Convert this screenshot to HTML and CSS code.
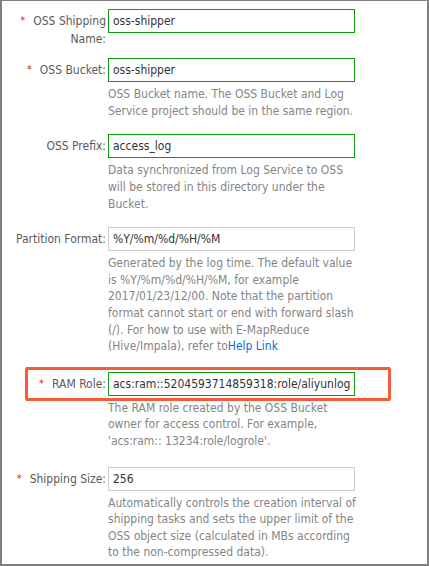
FILE: index.html
```html
<!DOCTYPE html>
<html lang="en">
<head>
  <meta charset="UTF-8" />
  <title>OSS Shipping</title>
  <link rel="stylesheet" href="styles.css">
</head>
<body>
  <div class="frame">
    <form class="ship-form">

      <div class="row row-first">
        <label class="label"><span class="req">*</span>OSS Shipping Name:</label>
        <div class="field">
          <input class="input active" type="text" value="oss-shipper" />
        </div>
      </div>

      <div class="row">
        <label class="label"><span class="req">*</span>OSS Bucket:</label>
        <div class="field">
          <input class="input active" type="text" value="oss-shipper" />
          <p class="help">OSS Bucket name. The OSS Bucket and Log<br>Service project should be in the same region.</p>
        </div>
      </div>

      <div class="row">
        <label class="label">OSS Prefix:</label>
        <div class="field">
          <input class="input active" type="text" value="access_log" />
          <p class="help">Data synchronized from Log Service to OSS<br>will be stored in this directory under the<br>Bucket.</p>
        </div>
      </div>

      <div class="row">
        <label class="label">Partition Format:</label>
        <div class="field">
          <input class="input" type="text" value="%Y/%m/%d/%H/%M" />
          <p class="help">Generated by the log time. The default value<br>is %Y/%m/%d/%H/%M, for example<br>2017/01/23/12/00. Note that the partition<br>format cannot start or end with forward slash<br>(/). For how to use with E-MapReduce<br>(Hive/Impala), refer to<a class="link" href="#">Help Link</a></p>
        </div>
      </div>

      <div class="row marked">
        <div class="highlight"></div>
        <label class="label"><span class="req">*</span>RAM Role:</label>
        <div class="field">
          <input class="input active" type="text" value="acs:ram::5204593714859318:role/aliyunlogdefaultrole" />
          <p class="help">The RAM role created by the OSS Bucket<br>owner for access control. For example,<br>'acs:ram:: 13234:role/logrole'.</p>
        </div>
      </div>

      <div class="row">
        <label class="label"><span class="req">*</span>Shipping Size:</label>
        <div class="field">
          <input class="input" type="text" value="256" />
          <p class="help">Automatically controls the creation interval of<br>shipping tasks and sets the upper limit of the<br>OSS object size (calculated in MBs according<br>to the non-compressed data).</p>
        </div>
      </div>

    </form>
  </div>
</body>
</html>
```

FILE: styles.css
```css
* {
  box-sizing: border-box;
}

body {
  margin: 0;
  background: #fff;
  font-family: 'DejaVu Sans Condensed', 'DejaVu Sans', sans-serif;
  font-size: 12px;
}

.frame {
  width: 429px;
  height: 566px;
  border: solid #808080;
  border-width: 1px 2px 2px 2px;
  overflow: hidden;
}

.ship-form {
  padding: 8px 0 0 10px;
}

.row {
  display: flex;
  align-items: flex-start;
  margin-bottom: 15px;
  position: relative;
}

.row-first {
  margin-bottom: 11px;
}

.marked {
  margin-top: 17px;
  margin-bottom: 17px;
}

.label {
  flex: none;
  width: 94px;
  padding-top: 4px;
  margin-right: 2px;
  text-align: right;
  line-height: 16.6px;
  color: #5a5a5a;
}

.req {
  color: #f01818;
  font-size: 11px;
  margin-right: 8px;
  position: relative;
  top: -1px;
}

.field {
  flex: none;
  width: 247px;
}

.input {
  display: block;
  width: 247px;
  height: 24px;
  padding: 0 4px;
  margin: 0;
  border: 1px solid #ccc;
  font-family: inherit;
  font-size: 12px;
  color: #333;
  background: #fff;
  outline: none;
}

.input.active {
  border-color: #0a9a0a;
}

.help {
  margin: 4px 0 0;
  line-height: 16.6px;
  white-space: nowrap;
  color: #858585;
}

.link {
  color: #0a6fd0;
  text-decoration: none;
}

.highlight {
  position: absolute;
  left: 13px;
  top: -5px;
  width: 366px;
  height: 34px;
  border: 3px solid #f25c3a;
  border-radius: 2px;
  pointer-events: none;
}
```
